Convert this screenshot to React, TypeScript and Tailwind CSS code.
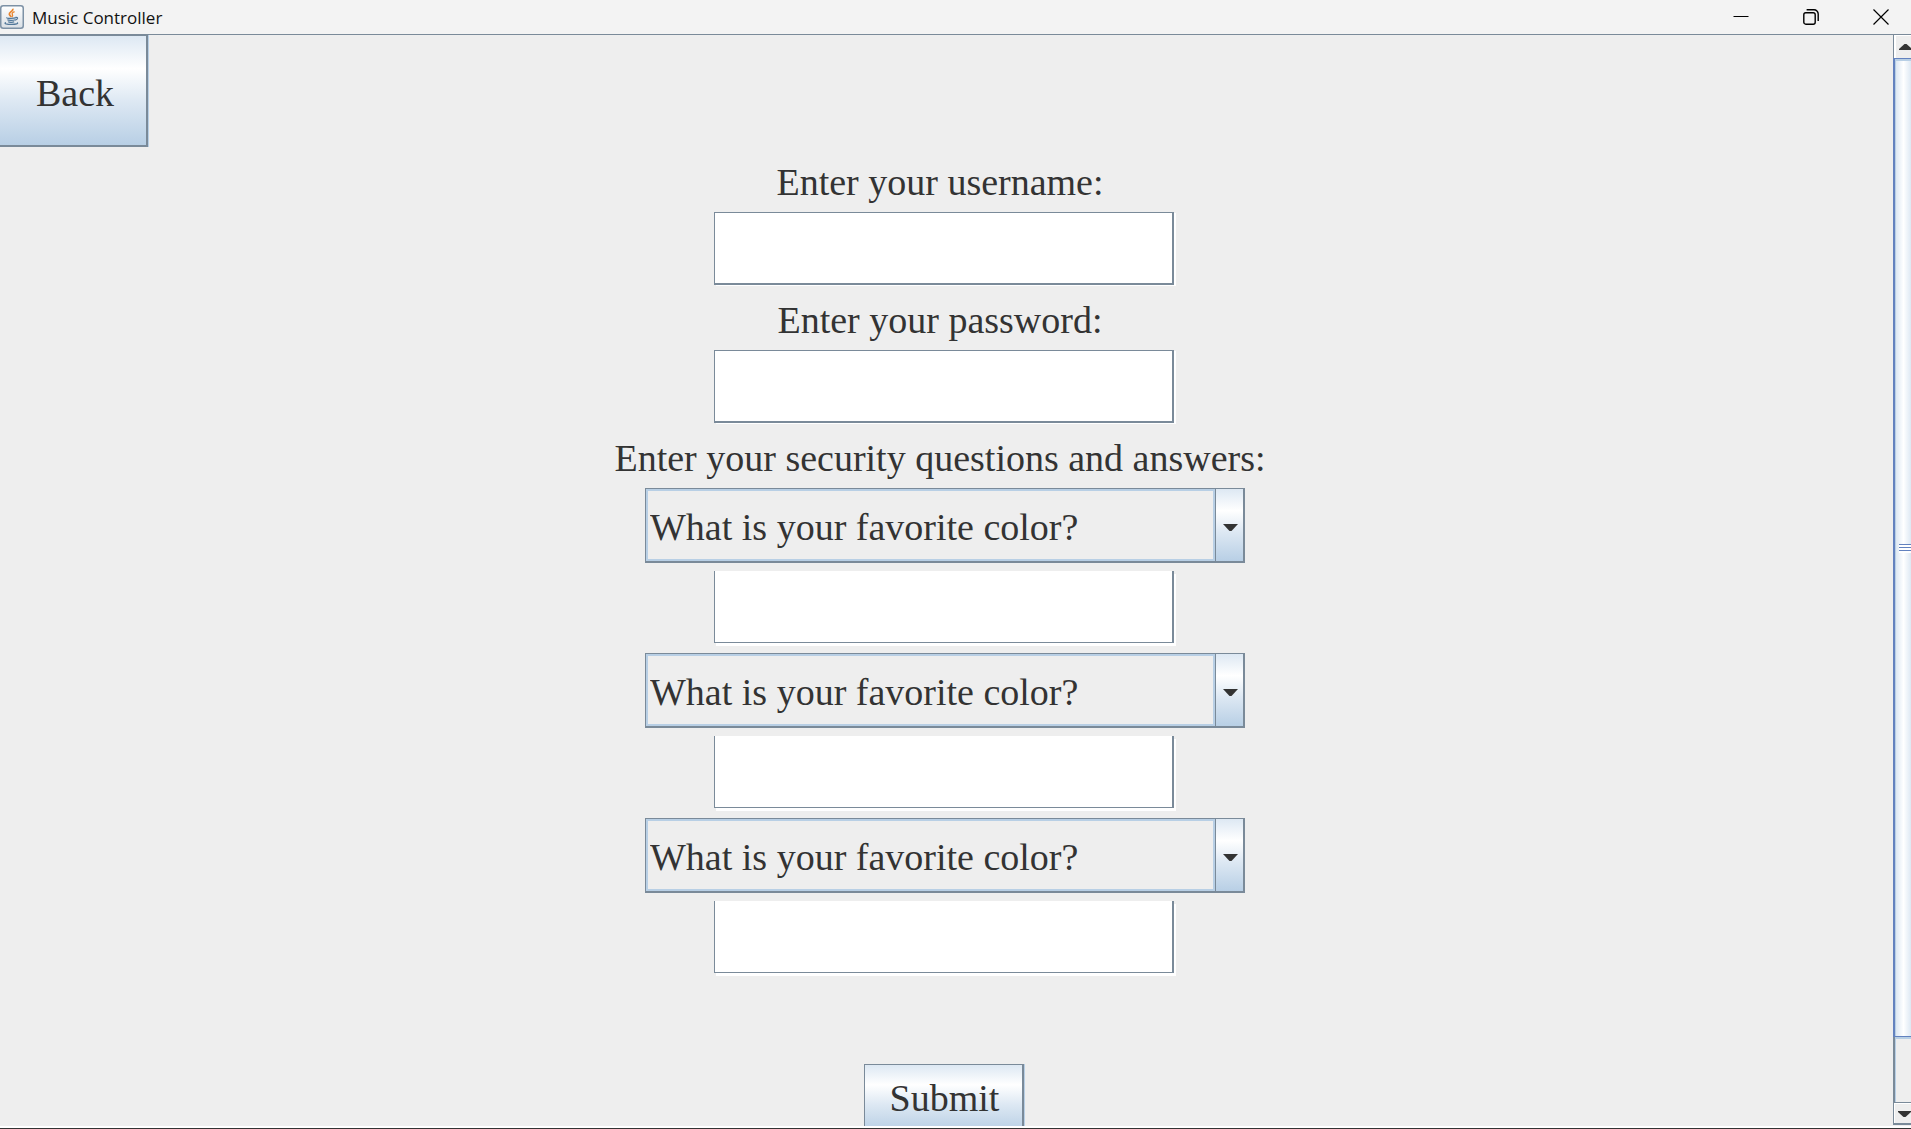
import { useState } from "react";

const QUESTIONS = [
  "What is your favorite color?",
  "What is your favorite food?",
  "What city were you born in?",
];

function JavaIcon() {
  return (
    <svg width="24" height="24" viewBox="0 0 24 24" fill="none" aria-hidden="true">
      <defs>
        <linearGradient id="tile" x1="0" y1="0" x2="0" y2="1">
          <stop offset="0" stopColor="#ffffff" />
          <stop offset="1" stopColor="#d9dfe5" />
        </linearGradient>
      </defs>
      <rect x="0.75" y="0.75" width="22.5" height="22.5" rx="2.5" fill="url(#tile)" stroke="#7d91a5" strokeWidth="1.5" />
      <path d="M12.6 3.8c1.4 2-3.6 3.4-3.3 5.4.1 1 1.4 1.7 2 2.7" stroke="#e8842c" strokeWidth="1.7" />
      <path d="M14.6 6.6c-2 .8-3 1.8-2.2 3 .6 1 .3 1.6-.5 2.4" stroke="#e8842c" strokeWidth="1.3" />
      <path d="M7 12.6c-1.6.9 7 1.1 9 0M15.5 12.4c3-.6 2.6 2-.4 2.7M7.4 14.6c.6 1 6 1 7.6.2M8.2 16.6c.7.9 4.6.9 6 .2" stroke="#52789a" strokeWidth="1.2" />
      <path d="M6 17.6c-3 .9 1 1.8 5.600 1.8s7.400-.8 5.400-1.800" stroke="#52789a" strokeWidth="1.2" />
    </svg>
  );
}

function TitleBar() {
  const control = "flex h-full w-[60px] items-center justify-center";
  return (
    <header className="flex h-[35px] shrink-0 items-center border-b border-[#7a8a99] bg-[#f3f3f3]">
      <JavaIcon />
      <h1 className="pl-2 pt-0.5 font-['Open_Sans',sans-serif] text-[17px] leading-6 text-[#111111]">Music Controller</h1>
      <div className="ml-auto flex h-full gap-[10px]">
        <button type="button" aria-label="Minimize" className={control}>
          <svg width="16" height="16" viewBox="0 0 16 16" stroke="#000000">
            <path d="M0.500 7.500h15" />
          </svg>
        </button>
        <button type="button" aria-label="Restore" className={control}>
          <svg width="16" height="16" viewBox="0 0 16 16" stroke="#000000" strokeWidth="1.4" fill="none">
            <rect x="0.8" y="3.800" width="11.400" height="11.400" rx="2" />
            <path d="M3.600 0.800h7.400a4.200 4.200 0 0 1 4.200 4.200v7" />
          </svg>
        </button>
        <button type="button" aria-label="Close" className={control}>
          <svg width="16" height="16" viewBox="0 0 16 16" stroke="#000000" strokeWidth="1.2">
            <path d="M0.500 0.500l15 15M15.500 0.500l-15 15" />
          </svg>
        </button>
      </div>
    </header>
  );
}

function Credential({ id, label, type }: { id: string; label: string; type: string }) {
  return (
    <>
      <label htmlFor={id} className="pr-2.5 pt-1 leading-[60px]">
        {label}
      </label>
      <input
        id={id}
        type={type}
        className="mb-px mr-0.5 h-[73px] w-[460px] border border-b-2 border-r-2 border-[#7a8a99] bg-white px-1 shadow-[2px_1px_0_#ffffff] outline-none"
      />
    </>
  );
}

function SecurityQuestion({ index }: { index: number }) {
  const [question, setQuestion] = useState(QUESTIONS[0]);
  return (
    <>
      <div className="relative mb-2 h-[75px] w-[600px] border border-b-2 border-r-2 border-[#7a8a99]">
        <select
          aria-label={`Security question ${index}`}
          value={question}
          onChange={(e) => setQuestion(e.target.value)}
          className="h-full w-full appearance-none border-2 border-[#b8cfe5] bg-[#eeeeee] pl-0.5 pt-1 outline-none"
        >
          {QUESTIONS.map((q) => (
            <option key={q}>{q}</option>
          ))}
        </select>
        <span className="pointer-events-none absolute inset-y-0 right-0 flex w-7 items-center justify-end border-l border-[#7a8a99] bg-[linear-gradient(#dde8f3,#ffffff_30%,#dde8f3_60%,#b8cfe5)] pr-[5px] pt-1 shadow-[-2px_0_0_#b8cfe5]">
          <svg width="15" height="7" viewBox="0 0 15 7" fill="#333333">
            <path d="M0 0h15L8.500 7h-2z" />
          </svg>
        </span>
      </div>
      <input
        type="text"
        aria-label={`Answer ${index}`}
        className="mb-2.5 mr-0.5 h-[72px] w-[460px] border-b border-l border-r-2 border-[#7a8a99] bg-white px-1 shadow-[2px_3px_0_#ffffff] outline-none"
      />
    </>
  );
}

function ScrollBar() {
  return (
    <div className="flex w-[18px] shrink-0 flex-col overflow-hidden">
      <button type="button" aria-label="Scroll up" className="h-[23px] shrink-0 border-l border-[#7a8a99]">
        <span className="flex h-full items-center border-l-2 border-t border-white pb-1 pl-[3px] pt-1">
          <svg width="13" height="6" viewBox="0 0 13 6" fill="#333333" className="shrink-0">
            <path d="M0 6h13v-1L7.500 0h-2L0 5z" />
          </svg>
        </span>
      </button>
      <div className="flex min-h-0 flex-1 flex-col">
        <div className="flex-[979] border-b border-l-2 border-t border-[#6382bf]">
          <div className="flex h-full items-center justify-end border-l border-t-2 border-[#b8cfe5] bg-[linear-gradient(to_right,#dde8f3,#ffffff_50%,#dde8f3)]">
            <div className="flex w-3 flex-col gap-0.5 bg-white pb-0.5">
              <div className="h-px bg-[#6382bf]" />
              <div className="h-px bg-[#6382bf]" />
              <div className="h-px bg-[#6382bf]" />
            </div>
          </div>
        </div>
        <div className="flex-[65] border-l-2 border-[#7a8a99]">
          <div className="h-full border-l border-t-2 border-[#b8cfe5]" />
        </div>
      </div>
      <button type="button" aria-label="Scroll down" className="mb-px h-[23px] shrink-0 border-b-2 border-l border-t border-[#7a8a99]">
        <span className="flex h-full items-center border-l border-t border-white pl-[3px]">
          <svg width="13" height="6" viewBox="0 0 13 6" fill="#333333" className="shrink-0">
            <path d="M0 0h13v1L7.500 6h-2L0 1z" />
          </svg>
        </span>
      </button>
    </div>
  );
}

export default function App() {
  return (
    <div className="flex h-screen flex-col bg-[#eeeeee] font-['Liberation_Serif',serif] text-[38px] text-[#333333]">
      <TitleBar />
      <div className="flex min-h-0 flex-1">
        <main className="min-w-0 flex-1 overflow-hidden">
          <button
            type="button"
            className="mb-px block h-28 w-[148px] border-b-2 border-r-2 border-t border-[#7a8a99] bg-[linear-gradient(#dde8f3,#ffffff_30%,#dde8f3_60%,#b8cfe5)] pl-1 pt-1.5 shadow-[1px_0_0_#b8cfe5]"
          >
            Back
          </button>
          <form className="flex flex-col items-center pr-[3px]" onSubmit={(e) => e.preventDefault()}>
            <Credential id="username" label="Enter your username:" type="text" />
            <Credential id="password" label="Enter your password:" type="password" />
            <h2 className="pr-2.5 pt-1 leading-[60px]">Enter your security questions and answers:</h2>
            <SecurityQuestion index={1} />
            <SecurityQuestion index={2} />
            <SecurityQuestion index={3} />
            <button
              type="submit"
              className="mr-0.5 mt-[81px] h-[68px] w-40 border border-r-2 border-[#7a8a99] bg-[linear-gradient(#dde8f3,#ffffff_30%,#dde8f3_60%,#b8cfe5)] pl-0.5 shadow-[1px_0_0_#b8cfe5]"
            >
              Submit
            </button>
          </form>
        </main>
        <ScrollBar />
      </div>
      <div className="h-[3px] shrink-0 border-b border-[#333333] bg-white" />
    </div>
  );
}
